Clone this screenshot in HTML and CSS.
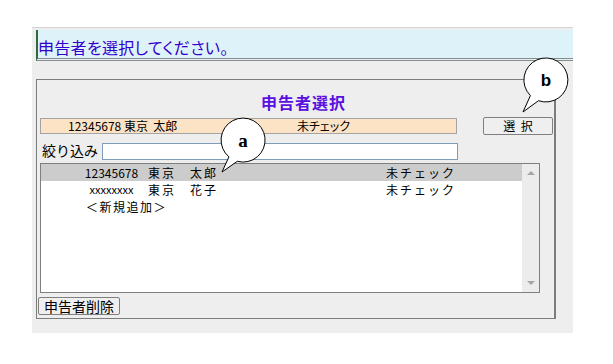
FILE: index.html
```html
<!DOCTYPE html>
<html lang="ja">
<head>
<meta charset="utf-8">
<link rel="stylesheet" href="styles.css">
</head>
<body>
<div class="frame">
  <div class="titlebar"><span class="title">申告者を選択してください。</span></div>
  <div class="panel">
    <div class="heading">申告者選択</div>
    <div class="current-row">
      <div class="current">
        <span class="cur-name">12345678 東京&nbsp;&nbsp;太郎</span>
        <span class="cur-status">未チェック</span>
      </div>
      <button class="btn btn-select">選 択</button>
    </div>
    <div class="filter-row">
      <span class="filter-label">絞り込み</span>
      <span class="filter-input"></span>
    </div>
    <div class="list">
      <div class="rows">
        <div class="row selected"><span class="col-id">12345678</span><span class="col-name">東京　太郎</span><span class="col-status">未チェック</span></div>
        <div class="row"><span class="col-id small">xxxxxxxx</span><span class="col-name">東京　花子</span><span class="col-status">未チェック</span></div>
        <div class="row new">＜新規追加＞</div>
      </div>
      <div class="scrollbar">
        <span class="arrow up"></span>
        <span class="arrow down"></span>
      </div>
    </div>
    <button class="btn btn-delete">申告者削除</button>
  </div>
</div>
<svg class="callouts" width="613" height="364" viewBox="0 0 613 364">
  <path d="M 228.9 156.9 L 222 172 L 237.3 161.3 A 22 22 0 1 0 228.9 156.9 Z" fill="#fff" stroke="#000" stroke-width="1"/>
  <text x="243" y="147" text-anchor="middle" class="lbl-a">a</text>
  <path d="M 530.4 95.6 L 523 112 L 538.5 100.7 A 22 22 0 1 0 530.4 95.6 Z" fill="#fff" stroke="#000" stroke-width="1"/>
  <text x="546" y="86" text-anchor="middle" class="lbl-b">b</text>
</svg>
</body>
</html>
```
FILE: styles.css
```css
* { box-sizing: border-box; }
body {
  margin: 0;
  background: #ffffff;
  font-family: "Noto Sans CJK JP", sans-serif;
  color: #000;
  position: relative;
  width: 613px;
  height: 364px;
  overflow: hidden;
}
.frame {
  margin: 27px 0 0 32px;
  width: 541px;
  height: 306px;
  background: #eeeeee;
  border-top: 1px solid #d2d2d2;
  padding-top: 2px;
}
.titlebar {
  margin-left: 4px;
  height: 31px;
  background: #def2f9;
  border-left: 2px solid #2e6a3e;
  border-bottom: 3px double #8a8a8a;
  padding: 5px 0 0 0;
}
.title {
  font-size: 16px;
  line-height: 20px;
  color: #3300cc;
  font-feature-settings: "palt";
  letter-spacing: 0.3px;
}
.panel {
  margin: 18px 0 0 4px;
  width: 520px;
  height: 240px;
  border: 1px solid #7c7c7c;
  border-right-width: 2px;
  display: flex;
  flex-direction: column;
  align-items: flex-start;
}
.heading {
  align-self: stretch;
  padding: 13px 0 0 16px;
  height: 31px;
  line-height: 18px;
  font-size: 16px;
  font-weight: bold;
  text-align: center;
  color: #5a10e0;
  letter-spacing: 1px;
}
.current-row {
  margin-top: 6px;
  display: flex;
  height: 18px;
}
.current {
  margin: 1px 0 0 3px;
  width: 417px;
  height: 16px;
  background: #fde3c6;
  border: 1px solid #a4a4a4;
  display: flex;
  font-size: 12px;
  line-height: 14px;
  padding-left: 27px;
}
.cur-name { width: 229px; }
.cur-status { font-feature-settings: "palt"; }
.btn {
  font-family: "Noto Sans CJK JP", sans-serif;
  background: #efefef;
  border: 1px solid #7f7f7f;
  border-radius: 2px;
  padding: 0;
  color: #000;
}
.btn-select {
  margin-left: 26px;
  width: 70px;
  height: 18px;
  font-size: 12px;
  line-height: 16px;
  word-spacing: 3px;
}
.filter-row {
  margin-top: 4px;
  height: 21px;
  display: flex;
  align-items: flex-end;
}
.filter-label {
  margin-left: 5px;
  width: 60px;
  font-size: 14px;
  line-height: 19px;
}
.filter-input {
  width: 356px;
  height: 17px;
  background: #ffffff;
  border: 1px solid #7f9db9;
}
.list {
  margin: 3px 0 0 3px;
  width: 500px;
  height: 130px;
  background: #ffffff;
  border: 1px solid #7f7f7f;
  display: flex;
}
.rows {
  width: 481px;
}
.row {
  height: 17px;
  line-height: 17px;
  font-size: 12px;
  display: flex;
  padding-left: 41px;
  white-space: nowrap;
}
.row.selected { background: #cccccc; }
.col-id { width: 59px; text-align: center; }
.col-id.small { font-size: 11px; }
.col-name { margin-left: 7px; width: 238px; letter-spacing: 2px; }
.col-status { letter-spacing: 2px; }
.row.new { padding-left: 45px; letter-spacing: 1.5px; }
.scrollbar {
  width: 17px;
  background: #ececec;
  display: flex;
  flex-direction: column;
  justify-content: space-between;
  align-items: center;
  padding: 7px 0 7px 0;
}
.arrow {
  width: 0;
  height: 0;
  border-left: 4px solid transparent;
  border-right: 4px solid transparent;
}
.arrow.up { border-bottom: 4px solid #a6a6a6; }
.arrow.down { border-top: 4px solid #a6a6a6; }
.btn-delete {
  margin: 4px 0 0 1px;
  width: 82px;
  height: 18px;
  font-size: 14px;
  line-height: 16px;
}
.callouts {
  position: absolute;
  left: 0;
  top: 0;
  pointer-events: none;
}
.lbl-a {
  font-family: "Liberation Serif", serif;
  font-weight: bold;
  font-size: 19px;
}
.lbl-b {
  font-family: "Liberation Sans", sans-serif;
  font-weight: bold;
  font-size: 17px;
}
```
